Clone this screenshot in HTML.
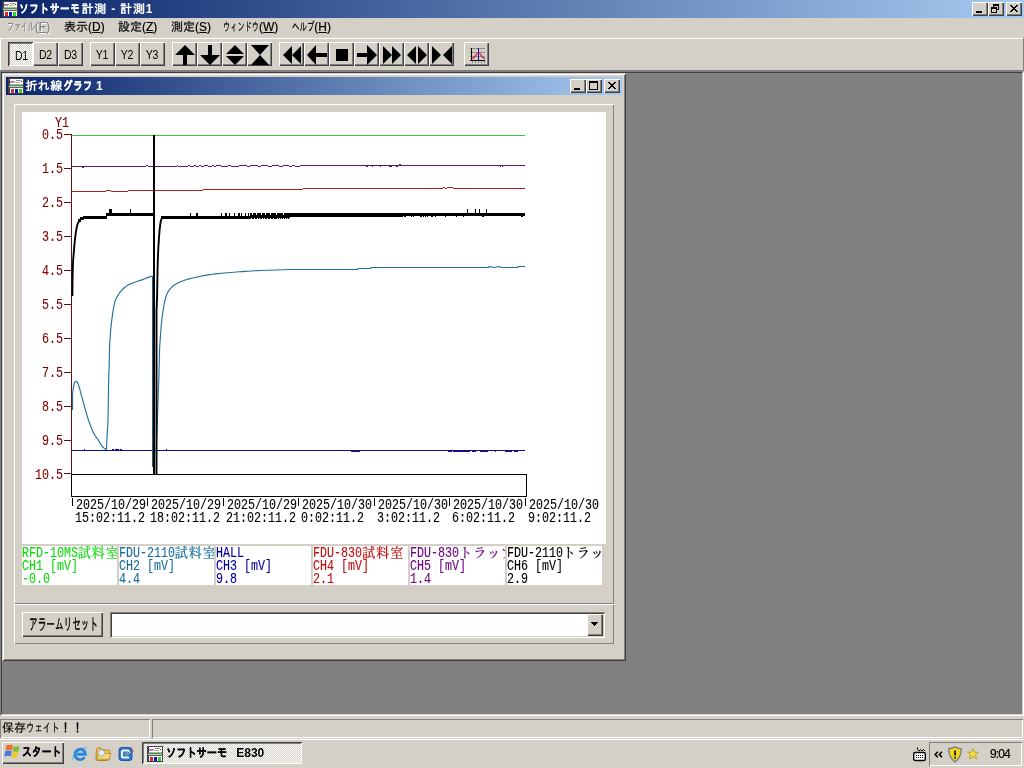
<!DOCTYPE html>
<html lang="ja"><head><meta charset="utf-8"><title>ソフトサーモ計測 - 計測1</title>
<style>
*{box-sizing:border-box;margin:0;padding:0}
html,body{width:1024px;height:768px;overflow:hidden;background:#D4D0C8}
body{position:relative;font-family:"Liberation Sans","IPAGothic",sans-serif;font-size:12px;color:#000;line-height:1}
div,svg{position:absolute}
.k{display:inline-block;transform-origin:0 50%}
.t{white-space:nowrap;line-height:12px;height:12px;-webkit-text-stroke:0.2px currentColor}
.b{font-weight:bold;-webkit-text-stroke:0}
.b .k{-webkit-text-stroke:0.3px currentColor}
.r{background:#D4D0C8;box-shadow:inset 1px 1px 0 #FFFFFF,inset -1px -1px 0 #404040,inset -2px -2px 0 #808080}
.s{box-shadow:inset 1px 1px 0 #404040,inset -1px -1px 0 #FFFFFF,inset 2px 2px 0 #808080}
.cb{background:#D4D0C8;box-shadow:inset 1px 1px 0 #FFFFFF,inset -1px -1px 0 #404040,inset -2px -2px 0 #808080}
.chk{background-color:#fff;background-image:linear-gradient(45deg,#D4D0C8 25%,transparent 25%,transparent 75%,#D4D0C8 75%),linear-gradient(45deg,#D4D0C8 25%,transparent 25%,transparent 75%,#D4D0C8 75%);background-size:2px 2px;background-position:0 0,1px 1px}
.m{font-family:"Liberation Mono","Noto Serif CJK SC",monospace;font-size:14px;line-height:13px;white-space:pre;transform:scaleX(.8333);transform-origin:0 0;-webkit-text-stroke:0.12px currentColor}
.c{display:inline-block;font-size:13px;letter-spacing:1px;font-weight:500;transform:scaleX(1.2);transform-origin:0 50%}
.tb{font-size:12px;letter-spacing:-0.3px;line-height:27px;text-align:center;width:25px;height:24px;top:42px}
</style></head><body><div id="root" style="left:0;top:0;width:1024px;height:768px;will-change:transform">
<div style="left:0px;top:0px;width:1024px;height:18px;background:linear-gradient(90deg,#0A246A,#A6CAF0)"></div>
<svg style="left:2px;top:1px" width="16" height="16" viewBox="0 0 16 16" shape-rendering="crispEdges"><rect x="0" y="0" width="16" height="16" fill="#404048"/><rect x="2" y="1" width="13" height="6" fill="#fff"/><rect x="2" y="3" width="5" height="1" fill="#b878c0"/><rect x="8" y="2" width="5" height="1" fill="#8888d0"/><rect x="2" y="4" width="4" height="1" fill="#c080b8"/><rect x="7" y="4" width="5" height="1" fill="#d8a868"/><rect x="13" y="3" width="1" height="1" fill="#402040"/><rect x="2" y="6" width="13" height="1" fill="#88c888"/><rect x="1" y="7" width="14" height="1" fill="#588858"/><rect x="1" y="8" width="14" height="1" fill="#c8c8c8"/><rect x="1" y="9" width="14" height="1" fill="#606060"/><rect x="2" y="10" width="13" height="5" fill="#fff"/><rect x="3" y="11" width="3" height="4" fill="#d82828"/><rect x="7" y="11" width="3" height="4" fill="#1010b8"/><rect x="11" y="11" width="3" height="4" fill="#28d828"/></svg>
<div class="t b" style="left:19px;top:3px;color:#fff;letter-spacing:0.8px"><span class="k" style="transform:scaleX(0.8);margin-right:-14.4px">ソフトサーモ</span>計測 - 計測1</div>
<div class="cb" style="left:972px;top:2px;width:16px;height:14px"><svg width="16" height="14" viewBox="0 0 16 14" shape-rendering="crispEdges" style="left:0;top:0"><rect x="4" y="9" width="6" height="2"/></svg></div>
<div class="cb" style="left:988px;top:2px;width:16px;height:14px"><svg width="16" height="14" viewBox="0 0 16 14" shape-rendering="crispEdges" style="left:0;top:0"><path d="M5 2h6v6h-2v-1h1v-3h-4v1h-1z M3 5h6v6h-6z M4 7v3h4v-3z" fill-rule="evenodd"/></svg></div>
<div class="cb" style="left:1006px;top:2px;width:16px;height:14px"><svg width="16" height="14" viewBox="0 0 16 14" shape-rendering="crispEdges" style="left:0;top:0"><path d="M4 3h2v1h-2zM10 3h2v1h-2zM5 4h2v1h-2zM9 4h2v1h-2zM6 5h4v1h-4zM7 6h2v1h-2zM6 7h4v1h-4zM5 8h2v1h-2zM9 8h2v1h-2zM4 9h2v1h-2zM10 9h2v1h-2z"/></svg></div>
<div class="t" style="left:7px;top:21px;color:#808080;text-shadow:1px 1px 0 #fff"><span class="k" style="transform:scaleX(0.58);margin-right:-20.2px">ファイル</span>(<u>F</u>)</div>
<div class="t" style="left:64px;top:21px;">表示(<u>D</u>)</div>
<div class="t" style="left:118px;top:21px;">設定(<u>Z</u>)</div>
<div class="t" style="left:171px;top:21px;">測定(<u>S</u>)</div>
<div class="t" style="left:223px;top:21px;"><span class="k" style="transform:scaleX(0.6);margin-right:-24.0px">ウィンドウ</span>(<u>W</u>)</div>
<div class="t" style="left:292px;top:21px;"><span class="k" style="transform:scaleX(0.62);margin-right:-13.7px">ヘルプ</span>(<u>H</u>)</div>
<div style="left:0px;top:38px;width:1023px;height:1px;background:#FFFFFF"></div>
<div style="left:0px;top:38px;width:1px;height:32px;background:#FFFFFF"></div>
<div style="left:1023px;top:38px;width:1px;height:33px;background:#808080"></div>
<div style="left:0px;top:70px;width:1024px;height:1px;background:#808080"></div>
<div class="tb s chk" style="left:8px;padding:1px 0 0 1px"><span class="k" style="transform:scaleX(.88);transform-origin:50% 50%">D1</span></div>
<div class="tb r" style="left:33px"><span class="k" style="transform:scaleX(.88);transform-origin:50% 50%">D2</span></div>
<div class="tb r" style="left:58px"><span class="k" style="transform:scaleX(.88);transform-origin:50% 50%">D3</span></div>
<div class="tb r" style="left:90px"><span class="k" style="transform:scaleX(.88);transform-origin:50% 50%">Y1</span></div>
<div class="tb r" style="left:115px"><span class="k" style="transform:scaleX(.88);transform-origin:50% 50%">Y2</span></div>
<div class="tb r" style="left:140px"><span class="k" style="transform:scaleX(.88);transform-origin:50% 50%">Y3</span></div>
<div class="tb r" style="left:172px"><svg width="25" height="24" viewBox="0 0 25 24" style="left:0;top:0"><path d="M13 3L23 13H15V23H11V13H3z"/></svg></div>
<div class="tb r" style="left:197px"><svg width="25" height="24" viewBox="0 0 25 24" style="left:0;top:0"><path d="M11 3H15V13H23L13 23L3 13H11z"/></svg></div>
<div class="tb r" style="left:222px"><svg width="25" height="24" viewBox="0 0 25 24" style="left:0;top:0"><path d="M13 3L22 12H4z M4 14H22L13 23z"/></svg></div>
<div class="tb r" style="left:247px"><svg width="25" height="24" viewBox="0 0 25 24" style="left:0;top:0"><path d="M4 3H22L13 13L22 23H4L13 13z"/></svg></div>
<div class="tb r" style="left:279px"><svg width="25" height="24" viewBox="0 0 25 24" style="left:0;top:0"><path d="M4 13L13 4V22z M13 13L22 4V22z"/></svg></div>
<div class="tb r" style="left:304px"><svg width="25" height="24" viewBox="0 0 25 24" style="left:0;top:0"><path d="M3 13L12 3V11H23V15H12V23z"/></svg></div>
<div class="tb r" style="left:329px"><svg width="25" height="24" viewBox="0 0 25 24" style="left:0;top:0"><path d="M7 7H19V19H7z"/></svg></div>
<div class="tb r" style="left:354px"><svg width="25" height="24" viewBox="0 0 25 24" style="left:0;top:0"><path d="M3 11H13V3L23 13L13 23V15H3z"/></svg></div>
<div class="tb r" style="left:379px"><svg width="25" height="24" viewBox="0 0 25 24" style="left:0;top:0"><path d="M4 4L13 13L4 22z M13 4L22 13L13 22z"/></svg></div>
<div class="tb r" style="left:404px"><svg width="25" height="24" viewBox="0 0 25 24" style="left:0;top:0"><path d="M3 13L12 4V22z M14 4L23 13L14 22z"/></svg></div>
<div class="tb r" style="left:429px"><svg width="25" height="24" viewBox="0 0 25 24" style="left:0;top:0"><path d="M3 4L12 13L3 22z M23 4V22L14 13z"/></svg></div>
<div class="tb r" style="left:464px"><svg width="25" height="24" viewBox="0 0 25 24" style="left:0;top:0"><g shape-rendering="crispEdges"><path d="M6 6.5h15M6 10.5h15M6 14.5h15" stroke="#909088" fill="none"/><path d="M7.5 6V19M6 18.5H21" stroke="#000" fill="none"/><path d="M8.5 19v2M11.5 19v2M14.5 19v2M17.5 19v2M20.5 19v2" stroke="#888" fill="none"/><path d="M14.5 6V18" stroke="#1010b0" stroke-width="1" fill="none"/></g><path d="M8 16.5C11 16.5 12.5 10.5 14.5 10.5S18 16.5 21 16.5" stroke="#d02040" fill="none" stroke-width="1.2"/></svg></div>
<div style="left:0px;top:71px;width:1024px;height:645px;background:#808080;border-top:1px solid #808080;border-left:1px solid #808080;border-right:1px solid #FFFFFF;border-bottom:1px solid #FFFFFF"></div>
<div style="left:1px;top:72px;width:1022px;height:643px;border-top:1px solid #404040;border-left:1px solid #404040;border-right:1px solid #D4D0C8;border-bottom:1px solid #D4D0C8"></div>
<div style="left:2px;top:73px;width:624px;height:588px;background:#D4D0C8;box-shadow:inset 1px 1px 0 #D4D0C8,inset -1px -1px 0 #404040,inset 2px 2px 0 #FFFFFF,inset -2px -2px 0 #808080"></div>
<div style="left:6px;top:77px;width:616px;height:18px;background:linear-gradient(90deg,#0A246A,#A6CAF0)"></div>
<svg style="left:8px;top:78px" width="16" height="16" viewBox="0 0 16 16" shape-rendering="crispEdges"><rect x="0" y="0" width="16" height="16" fill="#404048"/><rect x="2" y="1" width="13" height="6" fill="#fff"/><rect x="2" y="3" width="5" height="1" fill="#b878c0"/><rect x="8" y="2" width="5" height="1" fill="#8888d0"/><rect x="2" y="4" width="4" height="1" fill="#c080b8"/><rect x="7" y="4" width="5" height="1" fill="#d8a868"/><rect x="13" y="3" width="1" height="1" fill="#402040"/><rect x="2" y="6" width="13" height="1" fill="#88c888"/><rect x="1" y="7" width="14" height="1" fill="#588858"/><rect x="1" y="8" width="14" height="1" fill="#c8c8c8"/><rect x="1" y="9" width="14" height="1" fill="#606060"/><rect x="2" y="10" width="13" height="5" fill="#fff"/><rect x="3" y="11" width="3" height="4" fill="#d82828"/><rect x="7" y="11" width="3" height="4" fill="#1010b8"/><rect x="11" y="11" width="3" height="4" fill="#28d828"/></svg>
<div class="t b" style="left:25.500px;top:80px;color:#fff;letter-spacing:0.35px">折れ線<span class="k" style="transform:scaleX(0.8);margin-right:-7.2px">グラフ</span> 1</div>
<div class="cb" style="left:570px;top:79px;width:16px;height:14px"><svg width="16" height="14" viewBox="0 0 16 14" shape-rendering="crispEdges" style="left:0;top:0"><rect x="4" y="9" width="6" height="2"/></svg></div>
<div class="cb" style="left:586px;top:79px;width:16px;height:14px"><svg width="16" height="14" viewBox="0 0 16 14" shape-rendering="crispEdges" style="left:0;top:0"><path d="M3 2h9v9h-9z M4 4v6h7v-6z" fill-rule="evenodd"/></svg></div>
<div class="cb" style="left:604px;top:79px;width:16px;height:14px"><svg width="16" height="14" viewBox="0 0 16 14" shape-rendering="crispEdges" style="left:0;top:0"><path d="M4 3h2v1h-2zM10 3h2v1h-2zM5 4h2v1h-2zM9 4h2v1h-2zM6 5h4v1h-4zM7 6h2v1h-2zM6 7h4v1h-4zM5 8h2v1h-2zM9 8h2v1h-2zM4 9h2v1h-2zM10 9h2v1h-2z"/></svg></div>
<div style="left:14px;top:104px;width:600px;height:500px;box-shadow:inset 1px 1px 0 #FFFFFF,inset -1px -1px 0 #808080"></div>
<div style="left:14px;top:604px;width:600px;height:40px;box-shadow:inset 1px 1px 0 #FFFFFF,inset -1px -1px 0 #808080"></div>
<div style="left:22px;top:112px;width:584px;height:432px;background:#fff"></div>
<svg style="left:22px;top:112px" width="584" height="432" viewBox="22 112 584 432" shape-rendering="crispEdges" fill="none"><path d="M71.5 134V474" stroke="#601010"/><path d="M64 134.5H71M64 168.5H71M64 202.5H71M64 236.5H71M64 270.5H71M64 304.5H71M64 338.5H71M64 372.5H71M64 406.5H71M64 440.5H71M64 473.5H71" stroke="#601010"/><path d="M72 135.5H525" stroke="#38c838"/><path d="M72 166.5H146 M146 165.5H148 M148 166.5H153 M153 165.5H155 M155 166.5H177 M177 165.5H178 M178 166.5H188 M188 165.5H190M190 166.5H194M194 165.5H196M196 166.5H199M199 165.5H201M201 166.5H204M204 165.5H208M208 166.5H212M212 165.5H214M214 166.5H216M216 165.5H221M221 166.5H228M228 165.5H231M231 166.5H239M239 165.5H247M247 166.5H250M250 165.5H258M258 166.5H261M261 165.5H268M268 166.5H272M272 165.5H279M279 166.5H283M283 165.5H289M289 166.5H292M292 165.5H295M295 166.5H300M300 165.5H525M366 166.5H368M372 166.5H373M380 166.5H381M389 166.5H392M396 166.5H398M399 164.5H401M500 166.5H501M502 166.5H503M82 167.5H84" stroke="#5c1864"/><path d="M72 191.5H106M106 190.5H111M111 191.5H128M128 190.5H203M203 189.5H303M303 188.5H443M443 187.5H445M445 188.5H447M447 187.5H453M453 188.5H525" stroke="#b02020"/><path d="M72 450.5H525M84 449.5H85M112 449.5H114M115 449.5H119M120 449.5H122M166 449.5H167M351 451.5H360M448 451.5H452M453 451.5H470M472 451.5H476M480 451.5H488M495 451.5H496M505 451.5H512M514 451.5H518" stroke="#101088"/><path d="M72.5 410L72.5 408L72.5 405.9L72.5 403.9L72.5 401.9L72.5 399.8L72.5 397.8L72.5 395.8L72.6 393.7L72.8 391.7L73.1 389.7L73.4 387.7L73.7 385.6L74.2 383.6L75.1 381.8L76.6 381.2L77.8 383.1L78.5 385L79.1 387L79.7 388.9L80.2 390.9L80.8 392.8L81.3 394.8L81.8 396.8L82.4 398.7L82.9 400.7L83.4 402.7L84 404.6L84.5 406.6L85 408.5L85.6 410.5L86.1 412.5L86.7 414.4L87.3 416.3L87.9 418.3L88.5 420.2L89.2 422.2L89.9 424.1L90.6 426L91.3 427.9L92.1 429.8L92.9 431.6L93.9 433.4L94.9 435.2L96 436.9L97.1 438.5L98.3 440.2L99.4 441.9L100.5 443.7L101.6 445.4L102.8 447L104.3 448.3L106 449.5L106.5 449L106.6 446L106.7 443L106.9 440L107 437L107.2 434L107.4 431L107.6 428L107.8 425L107.9 422L108 419L108 416L108.1 413L108.2 410L108.2 407L108.3 404L108.3 401L108.3 398L108.4 394.9L108.4 391.9L108.5 388.9L108.5 385.9L108.6 382.9L108.7 379.9L108.8 376.9L108.8 373.9L109 370.9L109.1 367.9L109.2 364.9L109.2 361.9L109.3 358.9L109.4 355.9L109.4 352.9L109.5 349.9L109.6 346.9L109.7 343.9L109.8 340.9L110.1 337.9L110.3 334.9L110.6 331.9L110.8 328.9L111.1 325.9L111.4 322.9L111.8 319.9L112.2 316.9L112.6 314L113 311L113.5 308L114.1 305.1L114.8 302.1L115.8 299.3L117.2 296.6L118.8 294L120.5 291.6L122.6 289.3L124.8 287.3L127.2 285.6L129.8 284.2L132.7 283L135.5 282L138.3 281L141.2 280.1L144 279L146.8 277.9L149.6 276.9L152.5 276M156.5 467L156.5 464L156.5 461L156.5 458L156.5 455L156.5 452L156.5 449L156.5 446L156.6 443L156.6 440L156.7 437L156.9 433.9L157 430.9L157.1 427.9L157.2 424.9L157.3 421.9L157.4 418.9L157.5 415.9L157.6 412.9L157.7 409.9L157.8 406.9L157.9 403.9L158 400.9L158.1 397.9L158.2 394.9L158.3 391.9L158.4 388.9L158.5 385.9L158.7 382.9L158.8 379.9L158.9 376.9L159 373.9L159 370.9L159.1 367.9L159.2 364.9L159.3 361.9L159.3 358.9L159.4 355.9L159.5 352.8L159.6 349.8L159.7 346.8L159.9 343.8L160.1 340.8L160.3 337.8L160.5 334.8L160.8 331.9L161 328.9L161.2 325.9L161.5 322.9L161.8 319.9L162.2 316.9L162.6 313.9L163 310.9L163.5 308L164 305L164.6 302L165.3 299.1L166.1 296.2L167.2 293.4L168.7 290.8L170.5 288.4L172.6 286.3L175.1 284.5L177.7 283.1L180.4 281.8L183.2 280.7L186.1 279.7L189 278.9L191.9 278.2L194.8 277.5L197.8 276.9L200.7 276.2L203.7 275.6L206.6 275.1L209.6 274.6L212.6 274.2L215.5 273.9L218.5 273.6L221.5 273.3L224.5 273L227.5 272.7L230.5 272.5L233.5 272.3L236.5 272L239.5 271.8L242.5 271.6L245.5 271.4L248.5 271.2L251.5 271L254.5 270.8L257.5 270.6L260.5 270.5L290.5 269.5L357.5 269.5L358.5 268.5L370.5 268.5L371.5 267.5L488.5 267.5L489.5 266.5L494.5 267.5L498.5 266.5L501.5 267.5L517.5 267.5L518.5 266.5L525 266.5" stroke="#20709c" stroke-linejoin="round" shape-rendering="auto" stroke-width="1.15"/><path d="M152.5 276V467" stroke="#1c6088" stroke-width="1"/><path d="M72.4 296L72.4 294L72.4 291.9L72.4 289.9L72.4 287.8L72.5 285.8L72.5 283.7L72.5 281.7L72.5 279.6L72.6 277.6L72.6 275.6L72.7 273.5L72.7 271.5L72.8 269.4L72.8 267.4L72.9 265.4L73 263.3L73.1 261.3L73.2 259.2L73.4 257.2L73.6 255.2L73.7 253.1L73.9 251.1L74.1 249L74.2 247L74.4 245L74.6 242.9L74.8 240.9L75 238.9L75.3 236.8L75.5 234.8L75.8 232.8L76.1 230.8L76.5 228.8L76.9 226.7L77.4 224.7L78.1 222.9L79.1 221.1L80.5 219.6L82.1 218.3L84 217.5M156.5 474L156.5 472L156.5 470L156.5 468L156.5 466L156.5 463.9L156.5 461.9L156.5 459.9L156.5 457.9L156.5 455.9L156.5 453.9L156.5 451.9L156.5 449.9L156.5 447.9L156.5 445.8L156.5 443.8L156.5 441.8L156.5 439.8L156.5 437.8L156.5 435.8L156.5 433.8L156.5 431.8L156.5 429.8L156.5 427.7L156.5 425.7L156.5 423.7L156.5 421.7L156.5 419.7L156.5 417.7L156.5 415.7L156.5 413.7L156.5 411.7L156.5 409.6L156.5 407.6L156.5 405.6L156.5 403.6L156.5 401.6L156.5 399.6L156.5 397.6L156.5 395.6L156.5 393.6L156.5 391.5L156.5 389.5L156.5 387.5L156.5 385.5L156.5 383.5L156.5 381.5L156.5 379.5L156.5 377.5L156.5 375.5L156.5 373.5L156.5 371.4L156.5 369.4L156.5 367.4L156.5 365.4L156.5 363.4L156.5 361.4L156.5 359.4L156.5 357.4L156.5 355.4L156.5 353.4L156.5 351.3L156.5 349.3L156.5 347.3L156.5 345.3L156.5 343.3L156.5 341.3L156.5 339.3L156.5 337.3L156.5 335.3L156.5 333.2L156.5 331.2L156.5 329.2L156.5 327.2L156.5 325.2L156.5 323.2L156.5 321.2L156.5 319.2L156.5 317.2L156.5 315.2L156.5 313.1L156.5 311.1L156.6 309.1L156.7 307.1L156.8 305.1L156.8 303.1L156.9 301.1L157 299.1L157.1 297.1L157.1 295.1L157.2 293.1L157.2 291L157.2 289L157.3 287L157.3 285L157.3 283L157.4 281L157.4 279L157.4 277L157.5 275L157.5 272.9L157.5 270.9L157.6 268.9L157.6 266.9L157.7 264.9L157.7 262.9L157.8 260.9L157.9 258.9L157.9 256.9L158 254.9L158.1 252.8L158.2 250.8L158.3 248.8L158.4 246.8L158.5 244.8L158.7 242.8L158.8 240.8L158.9 238.8L159 236.8L159.2 234.8L159.4 232.8L159.5 230.8L159.7 228.8L160 226.8L160.2 224.8L160.5 222.7L160.9 220.7L161.5 218.9L163 217.5" stroke="#000" stroke-width="1.9" shape-rendering="auto" stroke-linejoin="round"/><g fill="#000"><rect x="78" y="219" width="3" height="3"/><rect x="80" y="217" width="4" height="3"/><rect x="83" y="216" width="24" height="3"/><rect x="106" y="213" width="47" height="3"/><rect x="109" y="209" width="3" height="5"/><rect x="130" y="209" width="1" height="5"/><rect x="161" y="216" width="90" height="3"/><rect x="250" y="213" width="40" height="6"/><rect x="290" y="213" width="235" height="3"/><rect x="290" y="216" width="112" height="1"/></g><path d="M154 135V474" stroke="#000" stroke-width="2"/><path d="M190 213V217M196 213V217M197 213V217M221 213V217M225 213V217M226 213V217M229 213V217M234 213V217M238 213V217M239 213V217M241 213V217M245 213V217M248 213V217M467 209V214M475 209V214M479 209V214M486 209V214" stroke="#000" transform="translate(0.5,0)"/><path d="M297 216V217M303 216V217M310 216V217M318 216V217M324 216V217M330 216V217M341 216V217M349 216V217M357 216V217M366 216V217M377 216V217M388 216V217M399 216V217M402 216V217M404 216V217M405 216V217M411 216V217M413 216V217M420 216V217M421 216V217M423 216V217M425 216V217M427 216V217M431 216V217M432 216V217M435 216V217M445 216V217M456 216V217M463 216V217M482 216V217M483 216V217M521 216V217M522 216V217" stroke="#000" transform="translate(0.5,0)"/><path d="M252 213V215M256 213V215M261 213V215M265 213V215M270 213V215M276 213V215M283 213V215M251 218V219M254 218V219M257 218V219M259 218V219M262 218V219M264 218V219M267 218V219M270 218V219M273 218V219M277 218V219M279 218V219M281 218V219M283 218V219M285 218V219M287 218V219M289 218V219" stroke="#fff" transform="translate(0.5,0)"/><rect x="71.5" y="474.5" width="455" height="22" stroke="#000"/><path d="M72.5 498V506M147.5 498V506M223.5 498V506M298.5 498V506M374.5 498V506M449.5 498V506M525.5 498V506" stroke="#000"/></svg>
<div class="m" style="left:22px;width:41px;text-align:right;transform-origin:100% 0;top:129px;color:#800000">0.5</div>
<div class="m" style="left:22px;width:41px;text-align:right;transform-origin:100% 0;top:163px;color:#800000">1.5</div>
<div class="m" style="left:22px;width:41px;text-align:right;transform-origin:100% 0;top:197px;color:#800000">2.5</div>
<div class="m" style="left:22px;width:41px;text-align:right;transform-origin:100% 0;top:231px;color:#800000">3.5</div>
<div class="m" style="left:22px;width:41px;text-align:right;transform-origin:100% 0;top:265px;color:#800000">4.5</div>
<div class="m" style="left:22px;width:41px;text-align:right;transform-origin:100% 0;top:299px;color:#800000">5.5</div>
<div class="m" style="left:22px;width:41px;text-align:right;transform-origin:100% 0;top:333px;color:#800000">6.5</div>
<div class="m" style="left:22px;width:41px;text-align:right;transform-origin:100% 0;top:367px;color:#800000">7.5</div>
<div class="m" style="left:22px;width:41px;text-align:right;transform-origin:100% 0;top:401px;color:#800000">8.5</div>
<div class="m" style="left:22px;width:41px;text-align:right;transform-origin:100% 0;top:435px;color:#800000">9.5</div>
<div class="m" style="left:22px;width:41px;text-align:right;transform-origin:100% 0;top:469px;color:#800000">10.5</div>
<div class="m" style="left:55px;top:117px;color:#800000">Y1</div>
<div class="m" style="left:76px;top:499px">2025/10/29</div>
<div class="m" style="left:75px;top:512px">15:02:11.2</div>
<div class="m" style="left:151px;top:499px">2025/10/29</div>
<div class="m" style="left:150px;top:512px">18:02:11.2</div>
<div class="m" style="left:227px;top:499px">2025/10/29</div>
<div class="m" style="left:226px;top:512px">21:02:11.2</div>
<div class="m" style="left:302px;top:499px">2025/10/30</div>
<div class="m" style="left:301px;top:512px">0:02:11.2</div>
<div class="m" style="left:378px;top:499px">2025/10/30</div>
<div class="m" style="left:377px;top:512px">3:02:11.2</div>
<div class="m" style="left:453px;top:499px">2025/10/30</div>
<div class="m" style="left:452px;top:512px">6:02:11.2</div>
<div class="m" style="left:529px;top:499px">2025/10/30</div>
<div class="m" style="left:528px;top:512px">9:02:11.2</div>
<div style="left:22px;top:546px;width:95px;height:39px;background:#fff;overflow:hidden;color:#10d810"><div class="m" style="left:0;top:1px">RFD-10MS<span class=c>試料室</span></div><div class="m" style="left:0;top:14px">CH1 [mV]</div><div class="m" style="left:0;top:27px">-0.0</div></div>
<div style="left:119px;top:546px;width:95px;height:39px;background:#fff;overflow:hidden;color:#1870a0"><div class="m" style="left:0;top:1px">FDU-2110<span class=c>試料室</span></div><div class="m" style="left:0;top:14px">CH2 [mV]</div><div class="m" style="left:0;top:27px">4.4</div></div>
<div style="left:216px;top:546px;width:95px;height:39px;background:#fff;overflow:hidden;color:#0000a0"><div class="m" style="left:0;top:1px">HALL</div><div class="m" style="left:0;top:14px">CH3 [mV]</div><div class="m" style="left:0;top:27px">9.8</div></div>
<div style="left:313px;top:546px;width:95px;height:39px;background:#fff;overflow:hidden;color:#c01010"><div class="m" style="left:0;top:1px">FDU-830<span class=c>試料室</span></div><div class="m" style="left:0;top:14px">CH4 [mV]</div><div class="m" style="left:0;top:27px">2.1</div></div>
<div style="left:410px;top:546px;width:95px;height:39px;background:#fff;overflow:hidden;color:#700880"><div class="m" style="left:0;top:1px">FDU-830<span class=c>トラップ</span></div><div class="m" style="left:0;top:14px">CH5 [mV]</div><div class="m" style="left:0;top:27px">1.4</div></div>
<div style="left:507px;top:546px;width:95px;height:39px;background:#fff;overflow:hidden;color:#000"><div class="m" style="left:0;top:1px">FDU-2110<span class=c>トラップ</span></div><div class="m" style="left:0;top:14px">CH6 [mV]</div><div class="m" style="left:0;top:27px">2.9</div></div>
<div class="r" style="left:22px;top:612px;width:81px;height:25px;text-align:center;line-height:24px;white-space:nowrap;padding-left:7px;text-align:left;font-size:16px;line-height:25px;-webkit-text-stroke:0.35px #000"><span class="k" style="transform:scaleX(0.54);margin-right:-58.9px">アラームリセット</span></div>
<div style="left:110px;top:612px;width:495px;height:26px;background:#fff;box-shadow:inset 1px 1px 0 #808080,inset -1px -1px 0 #FFFFFF,inset 2px 2px 0 #404040,inset -2px -2px 0 #D4D0C8"></div>
<div class="r" style="left:587px;top:614px;width:16px;height:22px"><svg width="16" height="22" viewBox="0 0 16 22" style="left:0;top:0" shape-rendering="crispEdges"><path d="M4 8h7v1h-1v1h-1v1h-1v1h-1v-1h-1v-1h-1v-1h-1z"/></svg></div>
<div style="left:0px;top:719px;width:150px;height:19px;box-shadow:inset 1px 1px 0 #808080,inset -1px -1px 0 #FFFFFF"></div>
<div style="left:152px;top:719px;width:871px;height:19px;box-shadow:inset 1px 1px 0 #808080,inset -1px -1px 0 #FFFFFF"></div>
<div class="t" style="left:2px;top:722px">保存<span class="k" style="transform:scaleX(0.7);margin-right:-14.4px">ウェイト</span>！！</div>
<div style="left:0px;top:739px;width:1024px;height:1px;background:#FFFFFF"></div>
<div class="r" style="left:2px;top:742px;width:62px;height:22px"></div>
<svg style="left:4px;top:744px" width="16" height="16" viewBox="0 0 16 16"><path d="M2.5 1.5Q5.500 0 9 1.500L8 6.500Q5 5 1.500 6.500z" fill="#e8742c"/><path d="M9.800 2.200Q12.500 3.500 15.500 2L14.500 7.200Q11.500 8.500 8.800 7.200z" fill="#7cc030"/><path d="M1.300 7.300Q4.500 5.800 7.800 7.300L6.800 12.300Q3.800 11 0.300 12.300z" fill="#4878d8"/><path d="M8.600 8Q11.500 9.300 14.300 8L13.300 13Q10.500 14.300 7.600 13z" fill="#f0c820"/></svg>
<div class="t b" style="left:22px;top:746px"><span class="k" style="transform:scaleX(0.82);margin-right:-8.6px">スタート</span></div>
<svg style="left:72px;top:746px" width="16" height="16" viewBox="0 0 16 16"><path d="M1 13.500Q1.500 4.500 14.500 1.500" stroke="#68b8f0" stroke-width="1.400" fill="none"/><path d="M12.600 11.200A5.200 5.200 0 1 1 13.400 8.200H5" stroke="#2888dc" stroke-width="2.900" fill="none"/></svg>
<svg style="left:95px;top:746px" width="17" height="16" viewBox="0 0 17 16"><path d="M1.500 3.500Q1.500 2 3 2H6L8 4H13.500Q15 4 15 5.500L14 13Q14 14.500 12.500 14.500H2.500Q1 14.500 1 13z" fill="#ecc458" stroke="#b08420"/><path d="M2 13L4 7.500H16L14 13.500z" fill="#f4d87c" stroke="#b08420" stroke-width="0.700"/><circle cx="6.500" cy="7" r="3" fill="#e4f0fc" stroke="#a8b8cc"/></svg>
<svg style="left:117.500px;top:745.500px" width="17" height="16" viewBox="0 0 17 16"><rect x="1" y="1.500" width="13" height="13" rx="2.500" fill="#2c74cc" stroke="#1c58a8"/><path d="M11 4.500H5.500Q4 4.500 4 6V10Q4 11.500 5.500 11.500H11" stroke="#e8f4ff" stroke-width="2.200" fill="none"/><path d="M7 9L12 5.500" stroke="#fff" stroke-width="2"/><path d="M6.500 9.300L11 6.200" stroke="#303030" stroke-width="1"/><circle cx="14.500" cy="5" r="0.900" fill="#e04020"/></svg>
<div class="s chk" style="left:142px;top:742px;width:160px;height:22px"></div>
<svg style="left:147px;top:746px" width="16" height="16" viewBox="0 0 16 16" shape-rendering="crispEdges"><rect x="0" y="0" width="16" height="16" fill="#404048"/><rect x="2" y="1" width="13" height="6" fill="#fff"/><rect x="2" y="3" width="5" height="1" fill="#b878c0"/><rect x="8" y="2" width="5" height="1" fill="#8888d0"/><rect x="2" y="4" width="4" height="1" fill="#c080b8"/><rect x="7" y="4" width="5" height="1" fill="#d8a868"/><rect x="13" y="3" width="1" height="1" fill="#402040"/><rect x="2" y="6" width="13" height="1" fill="#88c888"/><rect x="1" y="7" width="14" height="1" fill="#588858"/><rect x="1" y="8" width="14" height="1" fill="#c8c8c8"/><rect x="1" y="9" width="14" height="1" fill="#606060"/><rect x="2" y="10" width="13" height="5" fill="#fff"/><rect x="3" y="11" width="3" height="4" fill="#d82828"/><rect x="7" y="11" width="3" height="4" fill="#1010b8"/><rect x="11" y="11" width="3" height="4" fill="#28d828"/></svg>
<div class="t b" style="left:165.500px;top:747px"><span class="k" style="transform:scaleX(0.85);margin-right:-10.8px">ソフトサーモ</span><span style="letter-spacing:-2.500px">　</span>E830</div>
<div style="left:929px;top:742px;width:93px;height:24px;box-shadow:inset 1px 1px 0 #808080,inset -1px -1px 0 #FFFFFF"></div>
<svg style="left:913px;top:747px" width="13" height="15" viewBox="0 0 13 15"><path d="M4.500 0.500V2.500L6 4L7.500 2.500L9 4L10.500 2.500L12 4" stroke="#000" fill="none" stroke-width="1"/><rect x="0.700" y="5.500" width="11.600" height="8" rx="1.500" fill="#fff" stroke="#000" stroke-width="1.400"/><path d="M2.500 8.500h8M2.500 10.500h8" stroke="#000" stroke-dasharray="1 1" shape-rendering="crispEdges"/></svg>
<svg style="left:934px;top:751px" width="9" height="7" viewBox="0 0 9 7"><path d="M3.800 0.800L1.200 3.500L3.800 6.200M8 0.800L5.400 3.500L8 6.200" stroke="#000" stroke-width="1.600" fill="none"/></svg>
<svg style="left:947.500px;top:745.500px" width="14" height="17" viewBox="0 0 14 17"><path d="M7 0.800Q9.500 2.500 13.200 2.600Q13.600 11.500 7 16Q0.400 11.500 0.800 2.600Q4.500 2.500 7 0.800z" fill="#f0d418" stroke="#6c7490" stroke-width="1.200"/><rect x="6.200" y="4.500" width="1.800" height="5" fill="#202020"/><rect x="6.200" y="10.800" width="1.800" height="1.800" fill="#202020"/></svg>
<svg style="left:966.500px;top:747.500px" width="12" height="12" viewBox="0 0 12 12"><path d="M6 0.500L7.600 4.200H11.500L8.400 6.800L9.600 11L6 8.500L2.400 11L3.600 6.800L0.500 4.200H4.400z" fill="#f4e040" stroke="#b09820" stroke-width="0.800"/></svg>
<div class="t" style="left:990px;top:748px;letter-spacing:-0.9px">9:04</div>
</div></body></html>
